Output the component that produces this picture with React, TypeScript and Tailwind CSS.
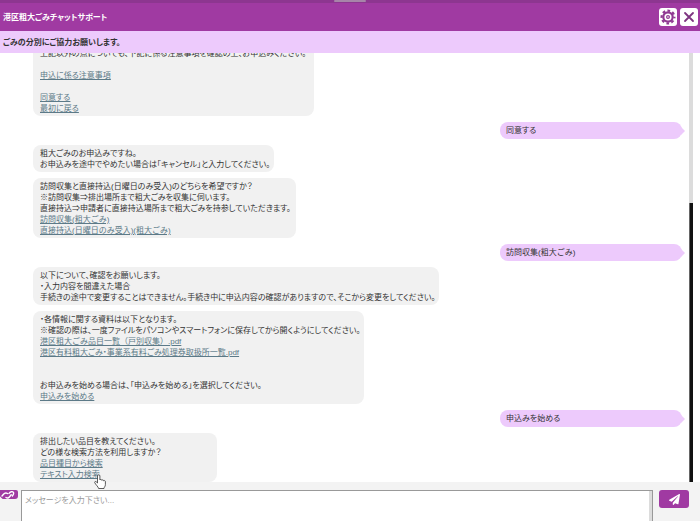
import React, { useState } from 'react'

type Line = { text: string; link?: boolean; full?: boolean }
type Message = { from: 'bot' | 'user'; width?: string; lines: Line[] }

const messages: Message[] = [
    {
        from: 'bot',
        width: 'min-w-[281px]',
        lines: [
            { text: '上記以外の点についても、下記に係る注意事項を確認の上、お申込みください。' },
            { text: '' },
            { text: '申込に係る注意事項', link: true },
            { text: '' },
            { text: '同意する', link: true },
            { text: '最初に戻る', link: true },
        ],
    },
    { from: 'user', lines: [{ text: '同意する' }] },
    {
        from: 'bot',
        width: 'min-w-[231px]',
        lines: [
            { text: '粗大ごみのお申込みですね。' },
            { text: 'お申込みを途中でやめたい場合は「キャンセル」と入力してください。' },
        ],
    },
    {
        from: 'bot',
        width: 'min-w-[263px]',
        lines: [
            { text: '訪問収集と直接持込(日曜日のみ受入)のどちらを希望ですか？' },
            { text: '※訪問収集⇒排出場所まで粗大ごみを収集に伺います。' },
            { text: '直接持込⇒申請者に直接持込場所まで粗大ごみを持参していただきます。' },
            { text: '訪問収集(粗大ごみ)', link: true, full: true },
            { text: '直接持込(日曜日のみ受入)(粗大ごみ)', link: true, full: true },
        ],
    },
    { from: 'user', lines: [{ text: '訪問収集(粗大ごみ)', full: true }] },
    {
        from: 'bot',
        width: 'min-w-[392px]',
        lines: [
            { text: '以下について、確認をお願いします。' },
            { text: '・入力内容を間違えた場合' },
            { text: '手続きの途中で変更することはできません。手続き中に申込内容の確認がありますので、そこから変更をしてください。' },
        ],
    },
    {
        from: 'bot',
        width: 'min-w-[311px]',
        lines: [
            { text: '・各情報に関する資料は以下となります。' },
            { text: '※確認の際は、一度ファイルをパソコンやスマートフォンに保存してから開くようにしてください。' },
            { text: '港区粗大ごみ品目一覧（戸別収集）.pdf', link: true, full: true },
            { text: '港区有料粗大ごみ・事業系有料ごみ処理券取扱所一覧.pdf', link: true },
            { text: '' },
            { text: '' },
            { text: 'お申込みを始める場合は、「申込みを始める」を選択してください。' },
            { text: '申込みを始める', link: true },
        ],
    },
    { from: 'user', lines: [{ text: '申込みを始める' }] },
    {
        from: 'bot',
        width: 'min-w-[184px]',
        lines: [
            { text: '排出したい品目を教えてください。' },
            { text: 'どの様な検索方法を利用しますか？' },
            { text: '品目種目から検索', link: true },
            { text: 'テキスト入力検索', link: true },
        ],
    },
]

function GearIcon() {
    return (
        <svg viewBox="0 0 16 16" className="h-4 w-4" fill="none" stroke="#8f3a92" aria-hidden="true">
            <circle cx="8" cy="8" r="6.4" strokeWidth="2.2" strokeDasharray="2.7 2.327" strokeDashoffset="1.35" />
            <circle cx="8" cy="8" r="4.7" strokeWidth="2.2" />
            <circle cx="8" cy="8" r="1.4" strokeWidth="1.2" />
        </svg>
    )
}

function CloseIcon() {
    return (
        <svg viewBox="0 0 16 16" className="h-4 w-4" fill="none" stroke="#7d3480" strokeWidth="1.8" strokeLinecap="round" aria-hidden="true">
            <path d="M4 4l8 8M12 4l-8 8" />
        </svg>
    )
}

function PlaneIcon() {
    return (
        <svg viewBox="0 0 512 512" className="h-[11px] w-[11px]" fill="#fff" aria-hidden="true">
            <path d="M476 3.200L12.500 270.600c-18.100 10.400-15.800 35.600 2.200 43.200L121 358.400l287.300-253.200c5.500-4.900 13.300 2.600 8.600 8.300L176 407v80.500c0 23.600 28.500 32.900 42.500 15.800L282 426l124.600 52.200c14.200 6 30.400-2.900 33-18.200l72-432C515 7.800 493.300-6.800 476 3.200z" />
        </svg>
    )
}

function LinkIcon() {
    return (
        <svg viewBox="0 0 18 9" className="h-[9px] w-[18px]" aria-hidden="true">
            <path d="M0 0h16a2 2 0 0 1 2 2v4a3 3 0 0 1-3 3H3a3 3 0 0 1-3-3z" fill="#a03aa2" />
            <path d="M0 6.500l2.500 2.500H0z" fill="#f3f3f3" />
            <path d="M7.500 3.500C6 2.500 4.500 3 3.500 4.200L2 6M6 7.500c1.500 1 2.800.3 3.600-.7l1.600-2M9 3.500c1.200-2 3.500-2.400 4.400-1.200.8 1.200 0 2.300-1 3.700" fill="none" stroke="#fff" strokeWidth="1.4" strokeLinecap="round" />
        </svg>
    )
}

function HandCursor() {
    return (
        <svg viewBox="0 0 12 15" className="pointer-events-none absolute top-1 left-full -ml-1.5 h-[15px] w-3" aria-hidden="true">
            <path d="M3.500 9V2a1.200 1.200 0 0 1 2.400 0v4c.3-.8 1.800-.7 1.900.3.400-.7 1.700-.5 1.800.5.500-.6 1.800-.2 1.800.8v3c0 2-1.400 2.600-1.400 3.900H4.600C4.500 13 1.500 10.500.7 8.600c-.4-1 .8-1.500 1.500-.8z" fill="#fff" stroke="#333" strokeWidth=".8" strokeLinejoin="round" />
        </svg>
    )
}

function Bubble({ message, last }: { message: Message; last: boolean }) {
    if (message.from === 'user') {
        return (
            <div className="flex shrink-0 items-center self-end">
                <p className={`h-[17px] w-[182px] rounded-lg bg-[#edcafc] pl-1.5 leading-[17px] ${message.lines[0].full ? "[font-feature-settings:normal]" : ''}`}>
                    {message.lines[0].text}
                </p>
                <svg viewBox="0 0 4 8" className="-ml-px h-2 w-1" fill="#edcafc" aria-hidden="true">
                    <path d="M0 0l4 4-4 4z" />
                </svg>
            </div>
        )
    }

    return (
        <div className={`${message.width} shrink-0 self-start rounded-lg bg-[#f1f1f1] pt-[3px] pr-1 pb-[2px] pl-[7px] whitespace-nowrap`}>
            {message.lines.map((line, i) => (
                <p key={i} className={`h-[11px] ${line.full ? '[font-feature-settings:normal]' : ''}`}>
                    {line.link ? (
                        <a href="#" className="relative text-[#5c7a88] underline">
                            {line.text}
                            {last && i === message.lines.length - 1 && <HandCursor />}
                        </a>
                    ) : (
                        line.text
                    )}
                </p>
            ))}
        </div>
    )
}

export default function App() {
    const [text, setText] = useState('')

    return (
        <div className="flex h-screen flex-col overflow-hidden bg-white font-['Liberation_Sans','Noto_Sans_CJK_JP',sans-serif] text-[8px] leading-[11px] text-[#333] [font-feature-settings:'palt']">
            <header className="flex h-[31px] shrink-0 flex-col bg-[#a03aa2]">
                <div className="flex h-[3px] shrink-0 justify-center bg-[#8d3690]">
                    <span className="h-[2px] w-8 rounded-full bg-[#a784a9]" />
                </div>
                <div className="flex flex-1 items-center justify-between pr-[2px] pl-[3px]">
                    <h1 className="font-bold text-white">港区粗大ごみチャットサポート</h1>
                    <div className="flex gap-[3px]">
                        <button type="button" aria-label="設定" className="flex h-[18px] w-[18px] items-center justify-center rounded-[3px] bg-white">
                            <GearIcon />
                        </button>
                        <button type="button" aria-label="閉じる" className="flex h-[18px] w-[18px] items-center justify-center rounded-[3px] bg-white">
                            <CloseIcon />
                        </button>
                    </div>
                </div>
            </header>

            <p className="flex h-[22px] shrink-0 items-center bg-[#edcafc] pl-[3px] font-bold">
                ごみの分別にご協力お願いします。
            </p>

            <main className="flex min-h-0 flex-1 pr-[7px]">
                {/* clipped at the top only, the cursor may hang over the form */}
                <div className="flex min-w-0 flex-1 flex-col justify-end gap-[6px] pr-1 pl-[33px] [clip-path:inset(0_0_-12px_0)]">
                    {messages.map((message, i) => (
                        <Bubble key={i} message={message} last={i === messages.length - 1} />
                    ))}
                </div>
                <div className="flex w-1 flex-col justify-end bg-[#dcdcdc]">
                    <div className="h-[65%] border-l border-[#666] bg-[#111]" />
                </div>
            </main>

            <form className="flex h-[39px] shrink-0 bg-[#f3f3f3] pt-2" onSubmit={(e) => e.preventDefault()}>
                <button type="button" aria-label="リンク" className="flex w-[21px] items-start">
                    <LinkIcon />
                </button>
                <div className="flex h-10 min-w-0 flex-1 border border-[#999] bg-white">
                    <textarea
                        aria-label="メッセージ"
                        placeholder="メッセージを入力下さい..."
                        value={text}
                        onChange={(e) => setText(e.target.value)}
                        className="block min-w-0 flex-1 resize-none px-[3px] py-1 outline-none placeholder:text-[#999]"
                    />
                    <div className="w-[3px] bg-[#dcdcdc]" />
                </div>
                <button type="submit" aria-label="送信" className="mr-[11px] ml-1.5 flex h-[18px] w-[30px] items-center justify-center rounded-[3px] bg-[#a03aa2]">
                    <PlaneIcon />
                </button>
            </form>
        </div>
    )
}
